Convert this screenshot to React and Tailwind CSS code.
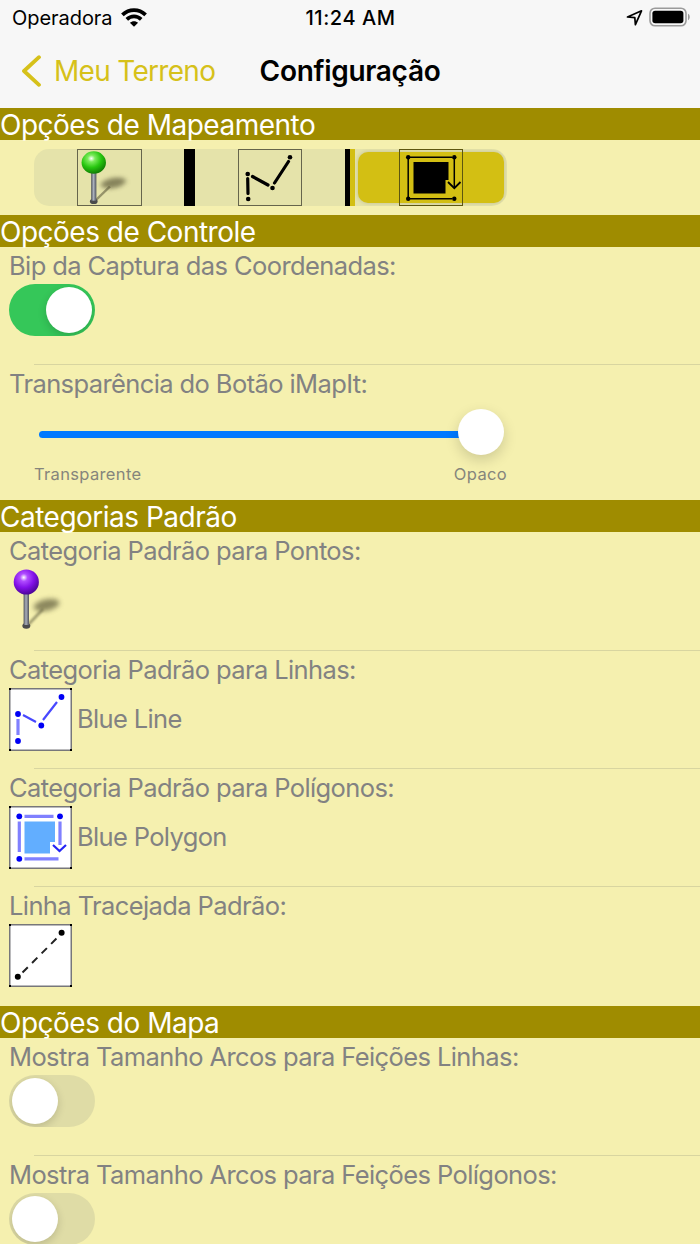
import { useState } from "react";

function SectionHeader({ children }) {
  return (
    <h2 className="h-8 bg-[#9f8c00] text-white text-[28px] leading-[34px] tracking-[-0.5px] whitespace-nowrap">
      {children}
    </h2>
  );
}

// One settings row: label on top, control below, inset separator at the bottom
function Row({ label, last, className = "h-[118px]", children }) {
  return (
    <div className={`flex flex-col shrink-0 ${className}`}>
      <p className="h-[37px] pl-[9px] text-[25.5px] leading-[38px] tracking-[-0.6px] text-[#828282] whitespace-nowrap">
        {label}
      </p>
      <div className="flex-1 pl-[9px]">{children}</div>
      {!last && <div className="h-px ml-[34px] bg-[#d8d5a0]" />}
    </div>
  );
}

function Toggle({ initial = false }) {
  const [on, setOn] = useState(initial);

  return (
    <button
      type="button"
      role="switch"
      aria-checked={on}
      onClick={() => setOn(!on)}
      className={`flex w-[86px] h-[52px] p-[3px] rounded-full overflow-hidden ${
        on ? "bg-[#35c759] justify-end" : "bg-[#dfdca6] justify-start"
      }`}
    >
      <span className="size-[46px] rounded-full bg-white shadow-[0_3px_9px_rgba(0,0,0,0.16)]" />
    </button>
  );
}

function Pin({ id, light, mid, dark, className = "w-[64px] h-[62px]" }) {
  return (
    <svg className={className} viewBox="0 0 64 62" preserveAspectRatio="none" fill="none">
      <defs>
        <radialGradient id={`${id}-head`} cx="0.4" cy="0.32" r="0.68">
          <stop offset="0" stopColor="#fff" />
          <stop offset="0.22" stopColor={light} />
          <stop offset="0.6" stopColor={mid} />
          <stop offset="1" stopColor={dark} />
        </radialGradient>
        <linearGradient id={`${id}-stem`} x1="0" x2="1">
          <stop offset="0" stopColor="#51555c" />
          <stop offset="0.45" stopColor="#a9afbb" />
          <stop offset="1" stopColor="#50545b" />
        </linearGradient>
        <filter id={`${id}-blur`} x="-40%" y="-40%" width="180%" height="180%">
          <feGaussianBlur stdDeviation="2.5" />
        </filter>
        <filter id={`${id}-soft`} x="-40%" y="-40%" width="180%" height="180%">
          <feGaussianBlur stdDeviation="0.8" />
        </filter>
      </defs>
      <path d="M18 57L34 40" stroke="#6d6a4a" strokeWidth="2.6" opacity="0.65" filter={`url(#${id}-soft)`} />
      <ellipse cx="37.5" cy="36" rx="13" ry="5.8" transform="rotate(-12 37.5 36)" fill="#5f5c3a" opacity="0.7" filter={`url(#${id}-blur)`} />
      <ellipse cx="17.3" cy="56.8" rx="4" ry="2.9" fill="#4a4b4c" />
      <rect x="14.6" y="23" width="5.4" height="33" fill={`url(#${id}-stem)`} />
      <circle cx="17.3" cy="13" r="12.6" fill={`url(#${id}-head)`} />
    </svg>
  );
}

function SegmentLine() {
  return (
    <svg className="w-[64px] h-[57px]" viewBox="0 0 64 57" fill="none" stroke="#000">
      <rect x="0.5" y="0.5" width="63" height="56" stroke="#66654c" />
      <path d="M9.7 29.5L10 44.5M14.5 27.5L30 36M36.5 34L50.5 12.5" strokeWidth="3.2" strokeLinecap="round" />
      <g fill="#000" stroke="none">
        <circle cx="9.7" cy="25" r="2.3" />
        <circle cx="10.2" cy="50" r="2.3" />
        <circle cx="34.5" cy="39" r="2.3" />
        <circle cx="52" cy="8.3" r="2.3" />
      </g>
    </svg>
  );
}

function SegmentPolygon() {
  return (
    <svg className="w-[64px] h-[57px]" viewBox="0 0 64 57" fill="none" stroke="#000">
      <rect x="0.5" y="0.5" width="63" height="56" stroke="#5d560f" />
      <path d="M14.5 13H49.5V31H46.5V44.5H14.5Z" fill="#000" stroke="none" />
      <path d="M11 8.3H53M9.2 10V48M11 49.7H53M55.3 10V38" strokeWidth="1.5" />
      <path d="M49 33L55.3 39.2L61.5 33" strokeWidth="1.8" />
      <g fill="#000" stroke="none">
        <circle cx="9.2" cy="8.3" r="2.2" />
        <circle cx="55.3" cy="8.3" r="2.2" />
        <circle cx="9.2" cy="49.7" r="2.2" />
        <circle cx="55.3" cy="49.7" r="2.2" />
      </g>
    </svg>
  );
}

// White 63px tile used by the category previews
function Tile({ children }) {
  return (
    <svg className="size-[63px] shrink-0" viewBox="0 0 63 63" fill="none">
      <rect x="0.75" y="0.75" width="61.5" height="61.5" fill="#fff" stroke="#77777a" strokeWidth="1.5" />
      <path d="M0 0h2v2h-2zM61 0h2v2h-2zM0 61h2v2h-2zM61 61h2v2h-2z" fill="#000" />
      {children}
    </svg>
  );
}

function MappingSegments() {
  return (
    <div className="flex w-[473px] h-[57px] ml-[34px] rounded-[15px] bg-[#e5e3aa] overflow-hidden">
      <div className="w-[150px] flex pl-[43px]">
        <div className="w-[65px] h-[57px] pt-px border border-[#66654c] overflow-hidden">
          <Pin id="green" light="#7cec5c" mid="#27c60f" dark="#128006" className="w-[62px] h-[55px] -ml-px" />
        </div>
      </div>
      <div className="w-[11px] bg-black" />
      <div className="w-[150px] flex pl-[43px]">
        <SegmentLine />
      </div>
      <div className="w-[5px] bg-black" />
      <div className="w-[5px] bg-[#d3bf13]" />
      <div className="flex-1 py-[3px] px-[3px]">
        <div className="flex h-[51px] rounded-[10px] bg-[#d3bf13] pl-[41px] shadow-[0_0_4px_rgba(0,0,0,0.16)]">
          <div className="-mt-[3px]">
            <SegmentPolygon />
          </div>
        </div>
      </div>
    </div>
  );
}

function OpacitySlider() {
  return (
    <div className="w-[473px] ml-[25px]">
      <div className="flex items-center h-[60px] pl-[5px] pr-[3px]">
        <div className="flex-1 h-[7px] mt-[5px] -mr-1 rounded-l-full bg-[#007aff]" />
        <div className="relative size-[46px] rounded-full bg-white shadow-[0_5px_14px_rgba(0,0,0,0.16)]" />
      </div>
      <div className="flex justify-between pt-[1px] text-[16.5px] leading-[22px] tracking-[0.34px] text-[#85857c]">
        <span>Transparente</span>
        <span>Opaco</span>
      </div>
    </div>
  );
}

function StatusBar() {
  return (
    <div className="grid grid-cols-3 items-center h-9 pl-3 pr-[9px] text-black">
      <div className="flex items-center gap-2">
        <span className="text-[20px] leading-[36px] tracking-[-0.05px]">Operadora</span>
        <svg className="w-[26px] h-[19px] -mt-[2px]" viewBox="0 0 26 19" fill="none" stroke="#000" strokeWidth="3.7">
          <path d="M1.4 6.9C8 0.5 18 0.5 24.6 6.9" />
          <path d="M5.8 11.4C10 7.4 16 7.4 20.2 11.4" />
          <path d="M13 18.8L8.9 14.8C11.2 12.7 14.8 12.7 17.1 14.8Z" fill="#000" stroke="none" />
        </svg>
      </div>
      <span className="text-center text-[20px] leading-[36px] font-medium tracking-[0.55px] -ml-[2px]">11:24 AM</span>
      <div className="flex items-center justify-end gap-[6px] -mt-[2px]">
        <svg className="w-[17px] h-[17px]" viewBox="0 0 17 17" fill="none" stroke="#000" strokeWidth="1.7" strokeLinejoin="round">
          <path d="M1.5 8L15.5 1.8L9.4 15.6L8.8 8.6Z" />
        </svg>
        <svg className="w-[42px] h-5" viewBox="0 0 42 20" fill="none">
          <rect x="1" y="1.2" width="36" height="17.6" rx="5" stroke="#9b9b9b" strokeWidth="1.6" />
          <rect x="3.4" y="3.7" width="31" height="12.6" rx="2.8" fill="#000" />
          <path d="M39 6.8C41.3 7.8 41.3 12.2 39 13.2Z" fill="#9b9b9b" />
        </svg>
      </div>
    </div>
  );
}

export default function App() {
  return (
    <div className="flex flex-col w-[700px] h-[1244px] overflow-hidden bg-[#f5f0af] font-['Inter',sans-serif]">
      <header className="h-[108px] shrink-0 bg-[#f7f7f7]">
        <StatusBar />
        <div className="grid grid-cols-[250px_200px_250px] items-center h-[70px]">
          <button type="button" className="flex items-center gap-[12px] pl-[21px] text-[#d6c11a]">
            <svg className="w-[21px] h-8" viewBox="0 0 21 32" fill="none" stroke="currentColor" strokeWidth="3.8" strokeLinecap="round" strokeLinejoin="round">
              <path d="M18 2.2L3 16L18 29.8" />
            </svg>
            <span className="text-[28px] leading-[36px] tracking-[-0.7px] whitespace-nowrap">Meu Terreno</span>
          </button>
          <h1 className="text-center text-[28px] leading-[36px] font-semibold tracking-[-0.3px] text-black">Configuração</h1>
        </div>
      </header>

      <SectionHeader>Opções de Mapeamento</SectionHeader>
      <div className="h-[75px] pt-[9px] shrink-0">
        <MappingSegments />
      </div>

      <SectionHeader>Opções de Controle</SectionHeader>
      <Row label="Bip da Captura das Coordenadas:">
        <Toggle initial />
      </Row>
      <Row label="Transparência do Botão iMapIt:" last className="h-[135px]">
        <OpacitySlider />
      </Row>

      <SectionHeader>Categorias Padrão</SectionHeader>
      <Row label="Categoria Padrão para Pontos:" className="h-[119px]">
        <Pin id="purple" light="#b14dff" mid="#8310e8" dark="#4d0699" />
      </Row>
      <Row label="Categoria Padrão para Linhas:">
        <div className="flex items-center gap-[5px]">
          <Tile>
            <path d="M9 31V47" stroke="#8080ff" strokeWidth="3.2" />
            <path d="M14 27L27 34M34 32L48 14" stroke="#4848ff" strokeWidth="2.2" />
            <g fill="#0000f5">
              <circle cx="9" cy="26" r="2.9" />
              <circle cx="9" cy="53" r="2.9" />
              <circle cx="32.3" cy="37.5" r="2.9" />
              <circle cx="52.5" cy="9" r="2.9" />
            </g>
          </Tile>
          <span className="text-[25.5px] tracking-[-0.65px] text-[#828282]">Blue Line</span>
        </div>
      </Row>
      <Row label="Categoria Padrão para Polígonos:">
        <div className="flex items-center gap-[5px]">
          <Tile>
            <path d="M15.5 15.5H46V36H41V47.5H15.5Z" fill="#62aeff" />
            <path d="M15.5 10.3H44.5M10.3 15.5V46M15.5 52.8H49.5M51 15.5V39" stroke="#8080ff" strokeWidth="3.2" />
            <path d="M44 39L50.5 45L57 39" stroke="#2424f5" strokeWidth="2.2" />
            <g fill="#0000f5">
              <circle cx="10.3" cy="10.3" r="2.9" />
              <circle cx="51" cy="10.3" r="2.9" />
              <circle cx="10.3" cy="52.8" r="2.9" />
            </g>
          </Tile>
          <span className="text-[25.5px] tracking-[-0.65px] text-[#828282]">Blue Polygon</span>
        </div>
      </Row>
      <Row label="Linha Tracejada Padrão:" last className="h-[119px]">
        <Tile>
          <path d="M13.5 48.5L48.5 13.5" stroke="#222" strokeWidth="2" strokeDasharray="7.5 6" />
          <circle cx="8.8" cy="52.8" r="3" fill="#000" />
          <circle cx="52.6" cy="8.8" r="3" fill="#000" />
        </Tile>
      </Row>

      <SectionHeader>Opções do Mapa</SectionHeader>
      <Row label="Mostra Tamanho Arcos para Feições Linhas:">
        <Toggle />
      </Row>
      <Row label="Mostra Tamanho Arcos para Feições Polígonos:" last>
        <Toggle />
      </Row>
    </div>
  );
}
